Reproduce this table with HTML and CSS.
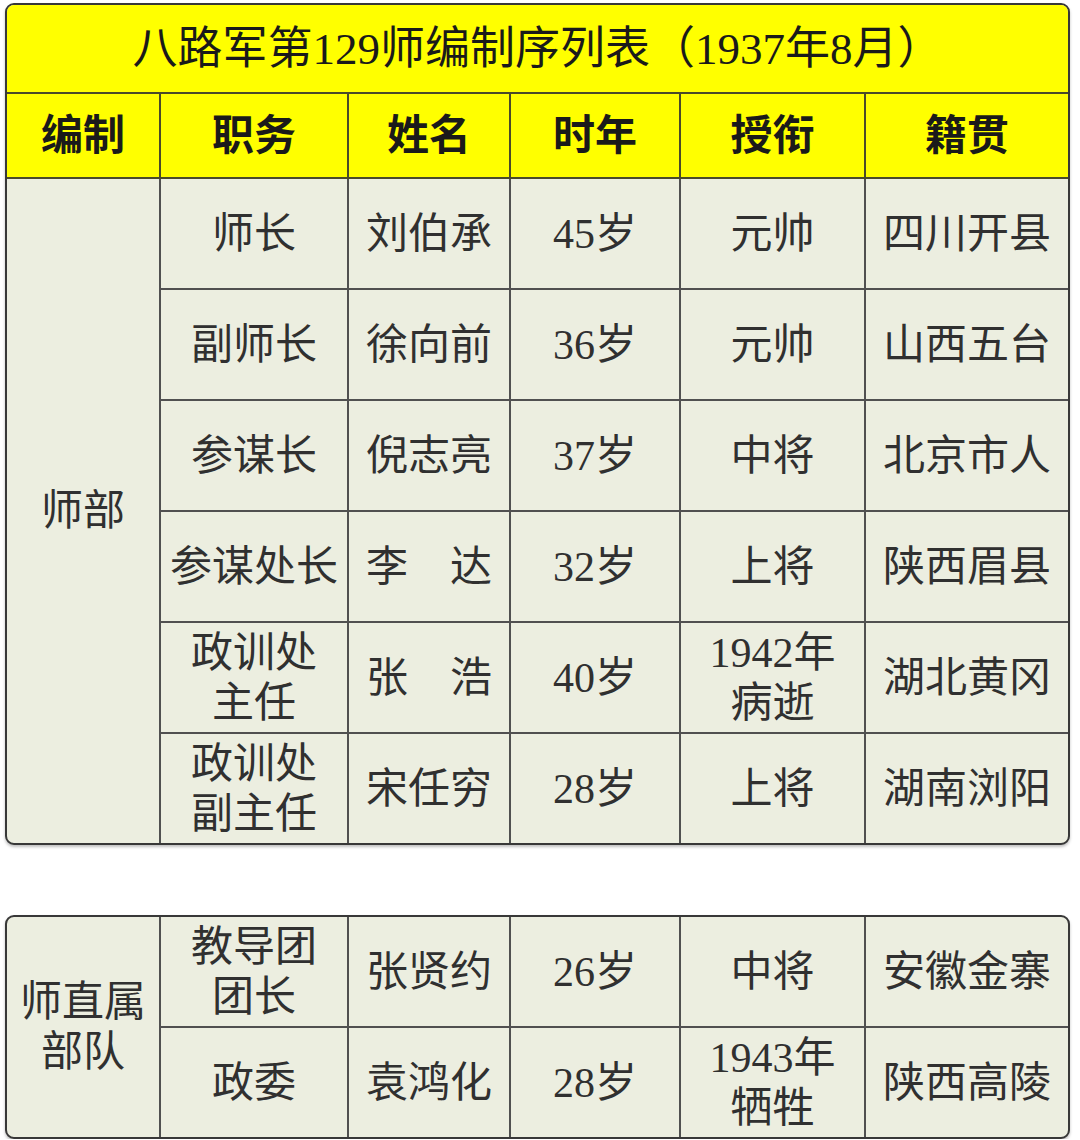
FILE: index.html
```html
<!DOCTYPE html>
<html lang="zh-CN">
<head>
<meta charset="utf-8">
<title>八路军第129师编制序列表</title>
<link rel="stylesheet" href="styles.css">
</head>
<body>
<div class="page">
  <div class="card card-main">
    <table class="grid">
      <colgroup>
        <col class="c1"><col class="c2"><col class="c3"><col class="c4"><col class="c5"><col class="c6">
      </colgroup>
      <thead>
        <tr class="title-row"><th colspan="6">八路军第129师编制序列表（1937年8月）</th></tr>
        <tr class="head-row">
          <th>编制</th><th>职务</th><th>姓名</th><th>时年</th><th>授衔</th><th>籍贯</th>
        </tr>
      </thead>
      <tbody>
        <tr><td rowspan="6" class="unit">师部</td><td>师长</td><td>刘伯承</td><td>45岁</td><td>元帅</td><td>四川开县</td></tr>
        <tr><td>副师长</td><td>徐向前</td><td>36岁</td><td>元帅</td><td>山西五台</td></tr>
        <tr><td>参谋长</td><td>倪志亮</td><td>37岁</td><td>中将</td><td>北京市人</td></tr>
        <tr><td>参谋处长</td><td>李　达</td><td>32岁</td><td>上将</td><td>陕西眉县</td></tr>
        <tr><td>政训处<br>主任</td><td>张　浩</td><td>40岁</td><td>1942年<br>病逝</td><td>湖北黄冈</td></tr>
        <tr><td>政训处<br>副主任</td><td>宋任穷</td><td>28岁</td><td>上将</td><td>湖南浏阳</td></tr>
      </tbody>
    </table>
  </div>

  <div class="card card-second">
    <table class="grid">
      <colgroup>
        <col class="c1"><col class="c2"><col class="c3"><col class="c4"><col class="c5"><col class="c6">
      </colgroup>
      <tbody>
        <tr><td rowspan="2" class="unit">师直属<br>部队</td><td>教导团<br>团长</td><td>张贤约</td><td>26岁</td><td>中将</td><td>安徽金寨</td></tr>
        <tr><td>政委</td><td>袁鸿化</td><td>28岁</td><td>1943年<br>牺牲</td><td>陕西高陵</td></tr>
      </tbody>
    </table>
  </div>
</div>
</body>
</html>
```

FILE: styles.css
```css
html, body {
  margin: 0;
  padding: 0;
  background: #ffffff;
}

.page {
  width: 1065px;
  padding: 3px 0 0 5px;
  display: flex;
  flex-direction: column;
  gap: 70px;
}

.card {
  border: 2px solid #383838;
  border-radius: 9px;
  overflow: hidden;
  background: #eceee0;
  box-shadow: 0 2px 3px rgba(0, 0, 0, 0.25);
}

.grid {
  width: 100%;
  border-collapse: collapse;
  table-layout: fixed;
  font-family: "Liberation Serif", "Noto Sans CJK SC", serif;
  color: #303030;
  font-size: 42px;
  line-height: 50px;
}

.c1 { width: 153px; }
.c2 { width: 188px; }
.c3 { width: 162px; }
.c4 { width: 170px; }
.c5 { width: 185px; }
.c6 { width: 203px; }

.grid th,
.grid td {
  border: 2px solid #505050;
  text-align: center;
  vertical-align: middle;
  padding: 0;
  white-space: nowrap;
}

.grid tr > :first-child { border-left: none; }
.grid tr > :last-child { border-right: none; }
.grid tr:first-child > * { border-top: none; }
.grid tbody tr:last-child > * { border-bottom: none; }
.grid td.unit { border-bottom: none; border-left: none; }

.title-row th {
  height: 87px;
  background: #ffff00;
  color: #1a1a1a;
  font-weight: 400;
  font-size: 45px;
  border-bottom: 2px solid #4a4a2a;
}

.head-row th {
  height: 83px;
  background: #ffff00;
  color: #1a1a1a;
  font-weight: 700;
  border-color: #4a4a2a;
}

.grid tbody td {
  height: 109px;
}

.card-main .grid tbody tr:first-child > * {
  border-top: 2px solid #3a3a3a;
}
```
